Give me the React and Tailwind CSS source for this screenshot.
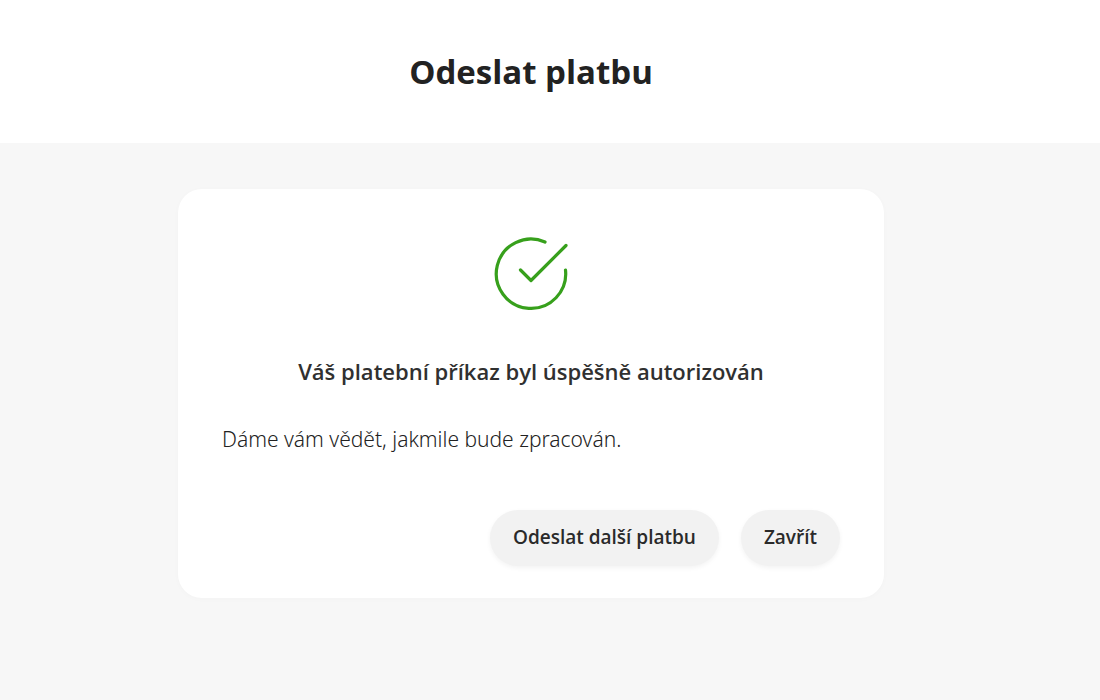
export default function App() {
  return (
    <div className="min-h-screen bg-[#f7f7f7] font-['Open_Sans',sans-serif] text-[#222222]">
      <header className="bg-white pt-12 pr-[38px] pb-[47px]">
        <h1 className="text-center text-[33px] leading-[48px] font-bold">Odeslat platbu</h1>
      </header>
      <main className="flex justify-center pt-[46px] pr-[38px] pb-10">
        <section className="w-full max-w-[706px] rounded-3xl bg-white px-11 pt-12 pb-8 shadow-[0_1px_6px_rgba(0,0,0,0.02)]">
          <svg className="mx-auto block size-[76px]" viewBox="0 0 76 76" fill="none" stroke="#37a01c" strokeWidth="3.2" strokeLinecap="round" strokeLinejoin="round" aria-hidden="true">
            <path d="M52 5A34.700 34.700 0 1 0 72.500 33" />
            <path d="M27.500 33L38 43.500L73 8.500" />
          </svg>
          <h2 className="mt-[42px] text-center text-[22px] leading-8 font-semibold text-[#303030]">Váš platební příkaz byl úspěšně autorizován</h2>
          <p className="mt-9 text-[21px] leading-8 font-['Noto_Sans','Open_Sans',sans-serif] font-light text-[#222222]">Dáme vám vědět, jakmile bude zpracován.</p>
          <div className="mt-[55px] flex justify-end gap-[22px]">
            <button type="button" className="h-14 rounded-full bg-[#f2f2f2] px-[23px] pb-0.5 text-[19px] font-semibold text-[#2a2a2a] shadow-[0_2px_5px_rgba(0,0,0,0.05)]">Odeslat další platbu</button>
            <button type="button" className="h-14 rounded-full bg-[#f2f2f2] px-[23px] pb-0.5 text-[19px] font-semibold text-[#2a2a2a] shadow-[0_2px_5px_rgba(0,0,0,0.05)]">Zavřít</button>
          </div>
        </section>
      </main>
    </div>
  );
}
